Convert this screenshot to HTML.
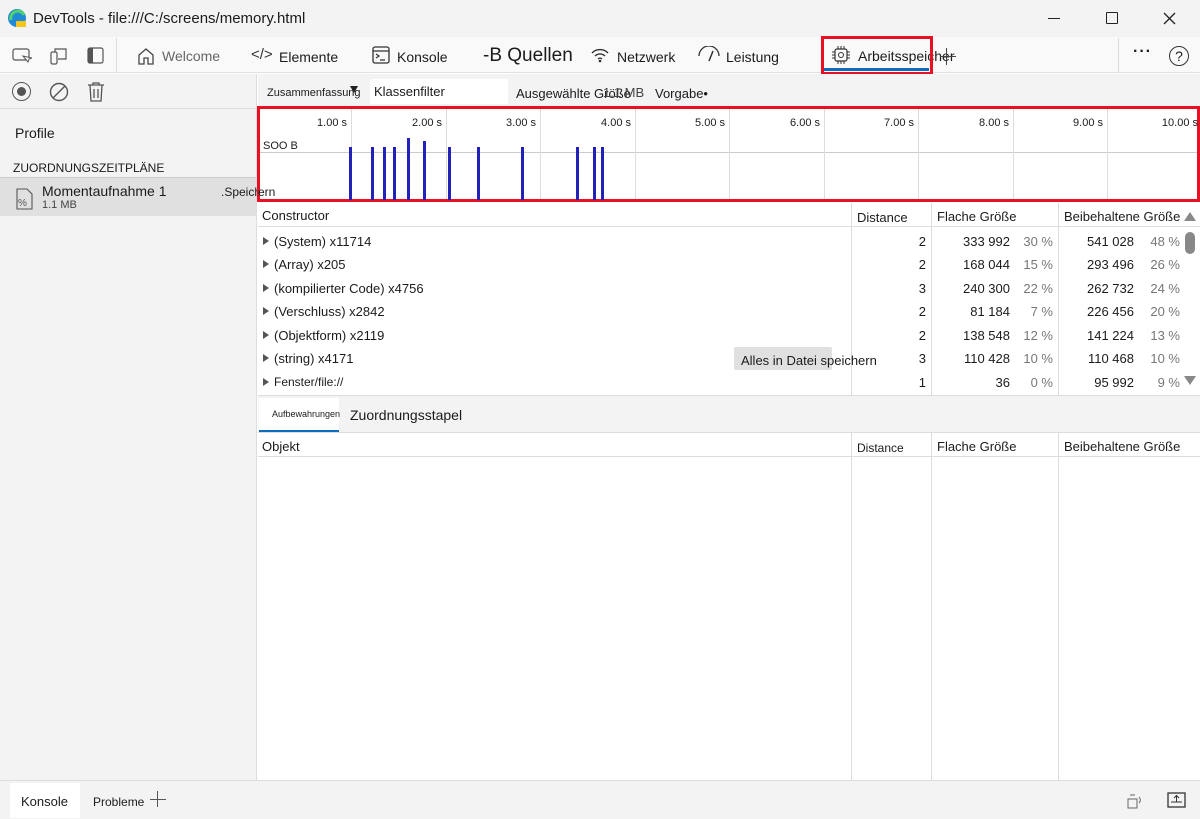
<!DOCTYPE html>
<html><head><meta charset="utf-8"><style>
*{margin:0;padding:0;box-sizing:border-box}
body{width:1200px;height:819px;overflow:hidden;background:#fff;font-family:"Liberation Sans",sans-serif;font-size:13px;color:#1b1b1b;position:relative}
.a{position:absolute;white-space:nowrap}
.ic{position:absolute}
.num{position:absolute;text-align:right;white-space:nowrap}
.pct{color:#777}
</style></head><body>
<!-- title bar -->
<div class="a" style="left:0;top:0;width:1200px;height:37px;background:#f3f3f3"></div>
<svg class="ic" style="left:7px;top:8px" width="20" height="20" viewBox="0 0 20 20"><circle cx="10" cy="10" r="9" fill="#1f8ad6"/><path d="M4 12a7 7 0 0 1 13-5" stroke="#4fd16b" stroke-width="3" fill="none"/><rect x="9" y="13" width="10" height="6" rx="1" fill="#f5c518"/></svg>
<div class="a" style="left:33px;top:10px;font-size:15px">DevTools - file:///C:/screens/memory.html</div>
<div class="a" style="left:1048px;top:18px;width:12px;height:1px;background:#222"></div>
<div class="a" style="left:1106px;top:12px;width:12px;height:12px;border:1.3px solid #222;border-radius:1px"></div>
<svg class="ic" style="left:1163px;top:12px" width="13" height="13"><path d="M1 1L12 12M12 1L1 12" stroke="#222" stroke-width="1.3"/></svg>
<!-- toolbar -->
<div class="a" style="left:0;top:37px;width:1200px;height:36px;background:#f9f9f9;border-bottom:1px solid #e0e0e0"></div>
<svg class="ic" style="left:12px;top:47px" width="20" height="18"><rect x="1" y="2" width="16" height="11" rx="2" fill="none" stroke="#555" stroke-width="1.2"/><path d="M11 9l5 6 1-3 3-1z" fill="#fff" stroke="#555"/></svg>
<svg class="ic" style="left:48px;top:46px" width="20" height="20"><rect x="3" y="6" width="6" height="12" rx="1.5" fill="none" stroke="#555" stroke-width="1.2"/><path d="M7 6V3h11v10h-8" fill="none" stroke="#555" stroke-width="1.2"/></svg>
<svg class="ic" style="left:87px;top:47px" width="18" height="18"><rect x="1" y="1" width="15" height="15" rx="2" fill="none" stroke="#555" stroke-width="1.2"/><rect x="1" y="1" width="5" height="15" fill="#555"/></svg>
<div class="a" style="left:116px;top:38px;width:1px;height:34px;background:#ddd"></div>
<svg class="ic" style="left:136px;top:46px" width="20" height="20"><path d="M3 18V9l7-6 7 6v9h-5v-6h-4v6z" fill="none" stroke="#444" stroke-width="1.3"/></svg>
<div class="a" style="left:162px;top:48px;font-size:14px;color:#666">Welcome</div>
<div class="a" style="left:251px;top:46px;font-size:15px;color:#333">&lt;/&gt;</div>
<div class="a" style="left:279px;top:49px;font-size:14px">Elemente</div>
<svg class="ic" style="left:372px;top:46px" width="18" height="18"><rect x="1" y="1" width="16" height="16" rx="2" fill="none" stroke="#333" stroke-width="1.3"/><path d="M1 5h16M4 8l3 2-3 2M8 14h5" stroke="#333" stroke-width="1.2" fill="none"/></svg>
<div class="a" style="left:397px;top:49px;font-size:14px">Konsole</div>
<div class="a" style="left:483px;top:45px;font-size:19px">-B Quellen</div>
<svg class="ic" style="left:590px;top:47px" width="20" height="16"><path d="M2 6a11 11 0 0 1 16 0M5 9a7 7 0 0 1 10 0M8 12a3 3 0 0 1 4 0" stroke="#333" stroke-width="1.4" fill="none"/><circle cx="10" cy="14" r="1.3" fill="#333"/></svg>
<div class="a" style="left:617px;top:49px;font-size:14px">Netzwerk</div>
<svg class="ic" style="left:697px;top:46px" width="24" height="18"><path d="M2 10a10 10 0 0 1 20 0" stroke="#333" stroke-width="1.3" fill="none"/><path d="M12 15l4-10" stroke="#333" stroke-width="1.5"/></svg>
<div class="a" style="left:726px;top:49px;font-size:14px">Leistung</div>
<svg class="ic" style="left:831px;top:45px" width="20" height="20"><rect x="4" y="4" width="12" height="12" rx="2" fill="none" stroke="#333" stroke-width="1.2"/><circle cx="10" cy="10" r="2.5" fill="none" stroke="#333"/><path d="M7 1v3M10 1v3M13 1v3M7 16v3M10 16v3M13 16v3M1 7h3M1 10h3M1 13h3M16 7h3M16 10h3M16 13h3" stroke="#333"/></svg>
<div class="a" style="left:858px;top:48px;font-size:14px">Arbeitsspeicher</div>
<div class="a" style="left:823px;top:68px;width:106px;height:3px;background:#0f6cbd"></div>
<div class="a" style="left:821px;top:36px;width:112px;height:39px;border:3px solid #e81123"></div>
<div class="a" style="left:940px;top:56px;width:16px;height:1px;background:#444"></div>
<div class="a" style="left:946px;top:48px;width:1px;height:17px;background:#444"></div>
<div class="a" style="left:1118px;top:38px;width:1px;height:34px;background:#ddd"></div>
<div class="a" style="left:1133px;top:43px;font-size:16px;font-weight:bold;letter-spacing:1px">···</div>
<div class="a" style="left:1169px;top:46px;width:20px;height:20px;border:1.3px solid #333;border-radius:50%;text-align:center;font-size:14px;line-height:18px">?</div>
<!-- sidebar -->
<div class="a" style="left:0;top:74px;width:257px;height:707px;background:#f3f3f3;border-right:1px solid #ddd"></div>
<div class="a" style="left:0;top:108px;width:257px;height:1px;background:#ddd"></div>
<div class="a" style="left:12px;top:82px;width:19px;height:19px;border:1.5px solid #555;border-radius:50%"></div>
<div class="a" style="left:17px;top:87px;width:9px;height:9px;background:#555;border-radius:50%"></div>
<svg class="ic" style="left:49px;top:82px" width="20" height="20"><circle cx="10" cy="10" r="8.5" fill="none" stroke="#555" stroke-width="1.4"/><path d="M4 16L16 4" stroke="#555" stroke-width="1.4"/></svg>
<svg class="ic" style="left:86px;top:81px" width="20" height="22"><path d="M2 4h16M7 4V2h6v2M4 4l1 16h10l1-16M8 8v9M12 8v9" fill="none" stroke="#555" stroke-width="1.3"/></svg>
<div class="a" style="left:15px;top:125px;font-size:14px">Profile</div>
<div class="a" style="left:13px;top:161px;font-size:12px">ZUORDNUNGSZEITPLÄNE</div>
<div class="a" style="left:0;top:177px;width:256px;height:39px;background:#e0e0e0;border-top:1px solid #ccc"></div>
<svg class="ic" style="left:15px;top:187px" width="20" height="24"><path d="M2 2h10l5 5v15H2z" fill="none" stroke="#555" stroke-width="1.1"/><text x="3" y="19" font-size="10" fill="#555" font-family="Liberation Sans">%</text></svg>
<div class="a" style="left:42px;top:183px;font-size:14px">Momentaufnahme 1</div>
<div class="a" style="left:42px;top:199px;font-size:11px;color:#444">1.1 MB</div>
<div class="a" style="left:221px;top:185px;font-size:12px">.Speichern</div>
<!-- main toolbar -->
<div class="a" style="left:258px;top:74px;width:942px;height:32px;background:#f3f3f3"></div>
<div class="a" style="left:267px;top:87px;font-size:11px">Zusammenfassung</div>
<div class="a" style="left:350px;top:86px;width:0;height:0;border-left:4px solid transparent;border-right:4px solid transparent;border-top:7px solid #222"></div>
<div class="a" style="left:370px;top:79px;width:138px;height:25px;background:#fff;border-radius:2px"></div>
<div class="a" style="left:374px;top:84px;font-size:13px">Klassenfilter</div>
<div class="a" style="left:516px;top:86px;font-size:13px">Ausgewählte Größe</div>
<div class="a" style="left:603px;top:85px;font-size:13px;color:#444">1.1 MB</div>
<div class="a" style="left:655px;top:86px;font-size:13px">Vorgabe•</div>
<!-- timeline -->
<div class="a" style="left:257px;top:106px;width:943px;height:96px;border:3px solid #e81123;background:#fff"></div>
<div class="a" style="left:260px;top:152px;width:937px;height:1px;background:#ccc"></div>
<div class="a" style="left:263px;top:140px;font-size:11px">SOO B</div>
<div class="a" style="left:221px;top:185px;font-size:12px;left:258px">ern</div>
<div id="tl"></div>
<!-- table header -->
<div class="a" style="left:258px;top:203px;width:942px;height:24px;border-bottom:1px solid #ddd"></div>
<div class="a" style="left:262px;top:208px">Constructor</div>
<div class="a" style="left:857px;top:210px">Distance</div>
<div class="a" style="left:937px;top:209px">Flache Größe</div>
<div class="a" style="left:1064px;top:209px">Beibehaltene Größe</div>
<div class="a" style="left:851px;top:203px;width:1px;height:192px;background:#ddd"></div>
<div class="a" style="left:931px;top:203px;width:1px;height:192px;background:#ddd"></div>
<div class="a" style="left:1058px;top:203px;width:1px;height:192px;background:#ddd"></div>
<div class="a" style="left:1184px;top:212px;width:0;height:0;border-left:6px solid transparent;border-right:6px solid transparent;border-bottom:9px solid #888"></div>
<div class="a" style="left:1185px;top:232px;width:10px;height:22px;background:#888;border-radius:5px"></div>
<div class="a" style="left:1184px;top:376px;width:0;height:0;border-left:6px solid transparent;border-right:6px solid transparent;border-top:9px solid #888"></div>
<div id="rows"></div>
<div class="a" style="left:734px;top:347px;width:98px;height:23px;background:#e0e0e0;border-radius:2px"></div>
<div class="a" style="left:741px;top:353px">Alles in Datei speichern</div>
<!-- lower tabs -->
<div class="a" style="left:258px;top:395px;width:942px;height:38px;background:#f3f3f3;border-top:1px solid #ddd;border-bottom:1px solid #ddd"></div>
<div class="a" style="left:259px;top:398px;width:80px;height:34px;background:#fff;border-bottom:2px solid #0f6cbd"></div>
<div class="a" style="left:272px;top:409px;font-size:9px">Aufbewahrungen</div>
<div class="a" style="left:350px;top:407px;font-size:14px">Zuordnungsstapel</div>
<div class="a" style="left:258px;top:433px;width:942px;height:24px;border-bottom:1px solid #ddd"></div>
<div class="a" style="left:262px;top:439px">Objekt</div>
<div class="a" style="left:857px;top:441px;font-size:12px">Distance</div>
<div class="a" style="left:937px;top:439px">Flache Größe</div>
<div class="a" style="left:1064px;top:439px">Beibehaltene Größe</div>
<div class="a" style="left:851px;top:433px;width:1px;height:348px;background:#ddd"></div>
<div class="a" style="left:931px;top:433px;width:1px;height:348px;background:#ddd"></div>
<div class="a" style="left:1058px;top:433px;width:1px;height:348px;background:#ddd"></div>
<!-- bottom bar -->
<div class="a" style="left:0;top:780px;width:1200px;height:39px;background:#f3f3f3;border-top:1px solid #ddd"></div>
<div class="a" style="left:10px;top:783px;width:70px;height:35px;background:#fff"></div>
<div class="a" style="left:21px;top:794px">Konsole</div>
<div class="a" style="left:93px;top:795px;font-size:12px">Probleme</div>
<div class="a" style="left:150px;top:799px;width:16px;height:1px;background:#555"></div>
<div class="a" style="left:157px;top:791px;width:1px;height:16px;background:#555"></div>
<svg class="ic" style="left:1126px;top:793px" width="18" height="16"><rect x="2" y="6" width="9" height="9" fill="none" stroke="#666"/><path d="M4 2h5M13 4a4 4 0 0 1 0 6" stroke="#666" fill="none"/></svg>
<svg class="ic" style="left:1167px;top:792px" width="20" height="16"><rect x="1" y="1" width="17" height="14" fill="none" stroke="#333" stroke-width="1.3"/><path d="M4 10h11M9.5 10V4M7 6l2.5-2.5L12 6" stroke="#333" fill="none"/></svg>
<script>
var tl=document.getElementById('tl'),h='';
var labels=['1.00 s','2.00 s','3.00 s','4.00 s','5.00 s','6.00 s','7.00 s','8.00 s','9.00 s','10.00 s'];
for(var i=0;i<10;i++){var x=351+i*94.5;
 if(i<9)h+='<div class="a" style="left:'+Math.round(x)+'px;top:109px;width:1px;height:90px;background:#ddd"></div>';
 h+='<div class="num" style="left:'+Math.round(x-80)+'px;width:76px;top:117px;font-size:11px">'+labels[i]+'</div>';}
var bars=[[350,147],[372,147],[384,147],[394,147],[408,138],[424,141],[449,147],[478,147],[522,147],[577,147],[594,147],[602,147]];
bars.forEach(function(b){h+='<div class="a" style="left:'+(b[0]-1)+'px;top:'+b[1]+'px;width:3px;height:'+(200-b[1])+'px;background:#2222bb"></div>';});
tl.innerHTML=h;
var rows=[['(System) x11714',2,'333 992','30 %','541 028','48 %'],['(Array) x205',2,'168 044','15 %','293 496','26 %'],['(kompilierter Code) x4756',3,'240 300','22 %','262 732','24 %'],['(Verschluss) x2842',2,'81 184','7 %','226 456','20 %'],['(Objektform) x2119',2,'138 548','12 %','141 224','13 %'],['(string) x4171',3,'110 428','10 %','110 468','10 %'],['Fenster/file://',1,'36','0 %','95 992','9 %']];
h='';rows.forEach(function(r,i){var y=234+i*23.4;if(i==6)y+=1;
 h+='<div class="a" style="left:263px;top:'+(y+3)+'px;width:0;height:0;border-top:4px solid transparent;border-bottom:4px solid transparent;border-left:6px solid #555"></div>';
 h+='<div class="a" style="left:274px;top:'+y+'px;'+(i==6?'font-size:12px':'')+'">'+r[0]+'</div>';
 h+='<div class="num" style="left:880px;width:46px;top:'+y+'px">'+r[1]+'</div>';
 h+='<div class="num" style="left:940px;width:70px;top:'+y+'px">'+r[2]+'</div>';
 h+='<div class="num pct" style="left:1010px;width:43px;top:'+y+'px">'+r[3]+'</div>';
 h+='<div class="num" style="left:1060px;width:74px;top:'+y+'px">'+r[4]+'</div>';
 h+='<div class="num pct" style="left:1136px;width:44px;top:'+y+'px">'+r[5]+'</div>';});
document.getElementById('rows').innerHTML=h;
</script>
</body></html>
